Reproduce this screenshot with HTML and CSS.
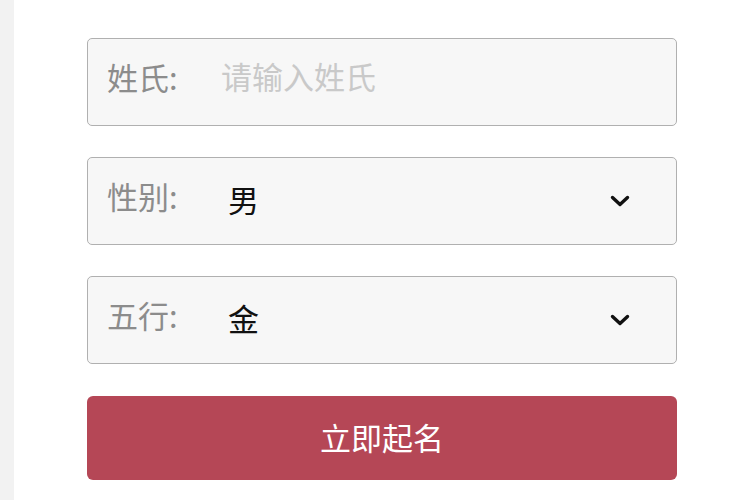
FILE: index.html
```html
<!DOCTYPE html>
<html lang="zh-CN">
<head>
<meta charset="utf-8">
<title>起名</title>
<link rel="stylesheet" href="styles.css">
</head>
<body>
<div class="page">
  <div class="strip"></div>
  <form class="form">
    <div class="field">
      <span class="label">姓氏:</span>
      <input class="text-input" type="text" placeholder="请输入姓氏">
    </div>
    <div class="field">
      <span class="label">性别:</span>
      <span class="value">男</span>
      <svg class="chevron" viewBox="0 0 20 12" width="20" height="12" aria-hidden="true"><path d="M2.5 2.5 L10 9.5 L17.5 2.5" fill="none" stroke="#111" stroke-width="3.4" stroke-linecap="round" stroke-linejoin="round"/></svg>
    </div>
    <div class="field">
      <span class="label">五行:</span>
      <span class="value">金</span>
      <svg class="chevron" viewBox="0 0 20 12" width="20" height="12" aria-hidden="true"><path d="M2.5 2.5 L10 9.5 L17.5 2.5" fill="none" stroke="#111" stroke-width="3.4" stroke-linecap="round" stroke-linejoin="round"/></svg>
    </div>
    <button class="submit" type="button">立即起名</button>
  </form>
</div>
</body>
</html>
```
FILE: styles.css
```css
html, body {
  margin: 0;
  padding: 0;
  background: #ffffff;
}
body {
  font-family: "Noto Sans CJK SC", "Noto Sans", sans-serif;
  width: 750px;
  height: 500px;
  overflow: hidden;
}
.page {
  display: flex;
  height: 500px;
}
.strip {
  width: 14px;
  background: #f2f2f2;
  flex: none;
}
.form {
  margin: 0;
  padding: 38px 0 0 73px;
  display: flex;
  flex-direction: column;
  gap: 31px;
}
.field {
  box-sizing: border-box;
  width: 590px;
  height: 88px;
  border: 1.5px solid #b0b0b0;
  border-radius: 5px;
  background: #f7f7f7;
  display: flex;
  align-items: center;
  padding: 0 46px 0 19px;
}
.label {
  width: 114px;
  flex: none;
  font-size: 31px;
  color: #8c8c8c;
  line-height: 1;
  margin-bottom: 12px;
}
.text-input {
  flex: 1;
  border: none;
  outline: none;
  background: transparent;
  font-family: inherit;
  font-size: 31px;
  color: #222;
  padding: 0;
  margin: 0 0 14px 0;
}
.text-input::placeholder {
  color: #c9c9c9;
}
.value {
  flex: 1;
  font-size: 31px;
  color: #111;
  padding-left: 7px;
  line-height: 1;
  margin-bottom: 6px;
}
.chevron {
  flex: none;
  display: block;
}
.submit {
  box-sizing: border-box;
  width: 590px;
  height: 84px;
  margin-top: 1px;
  border: none;
  border-radius: 6px;
  background: #b54756;
  color: #ffffff;
  font-family: inherit;
  font-size: 31px;
  padding: 0 0 4px 0;
  cursor: pointer;
}
```
